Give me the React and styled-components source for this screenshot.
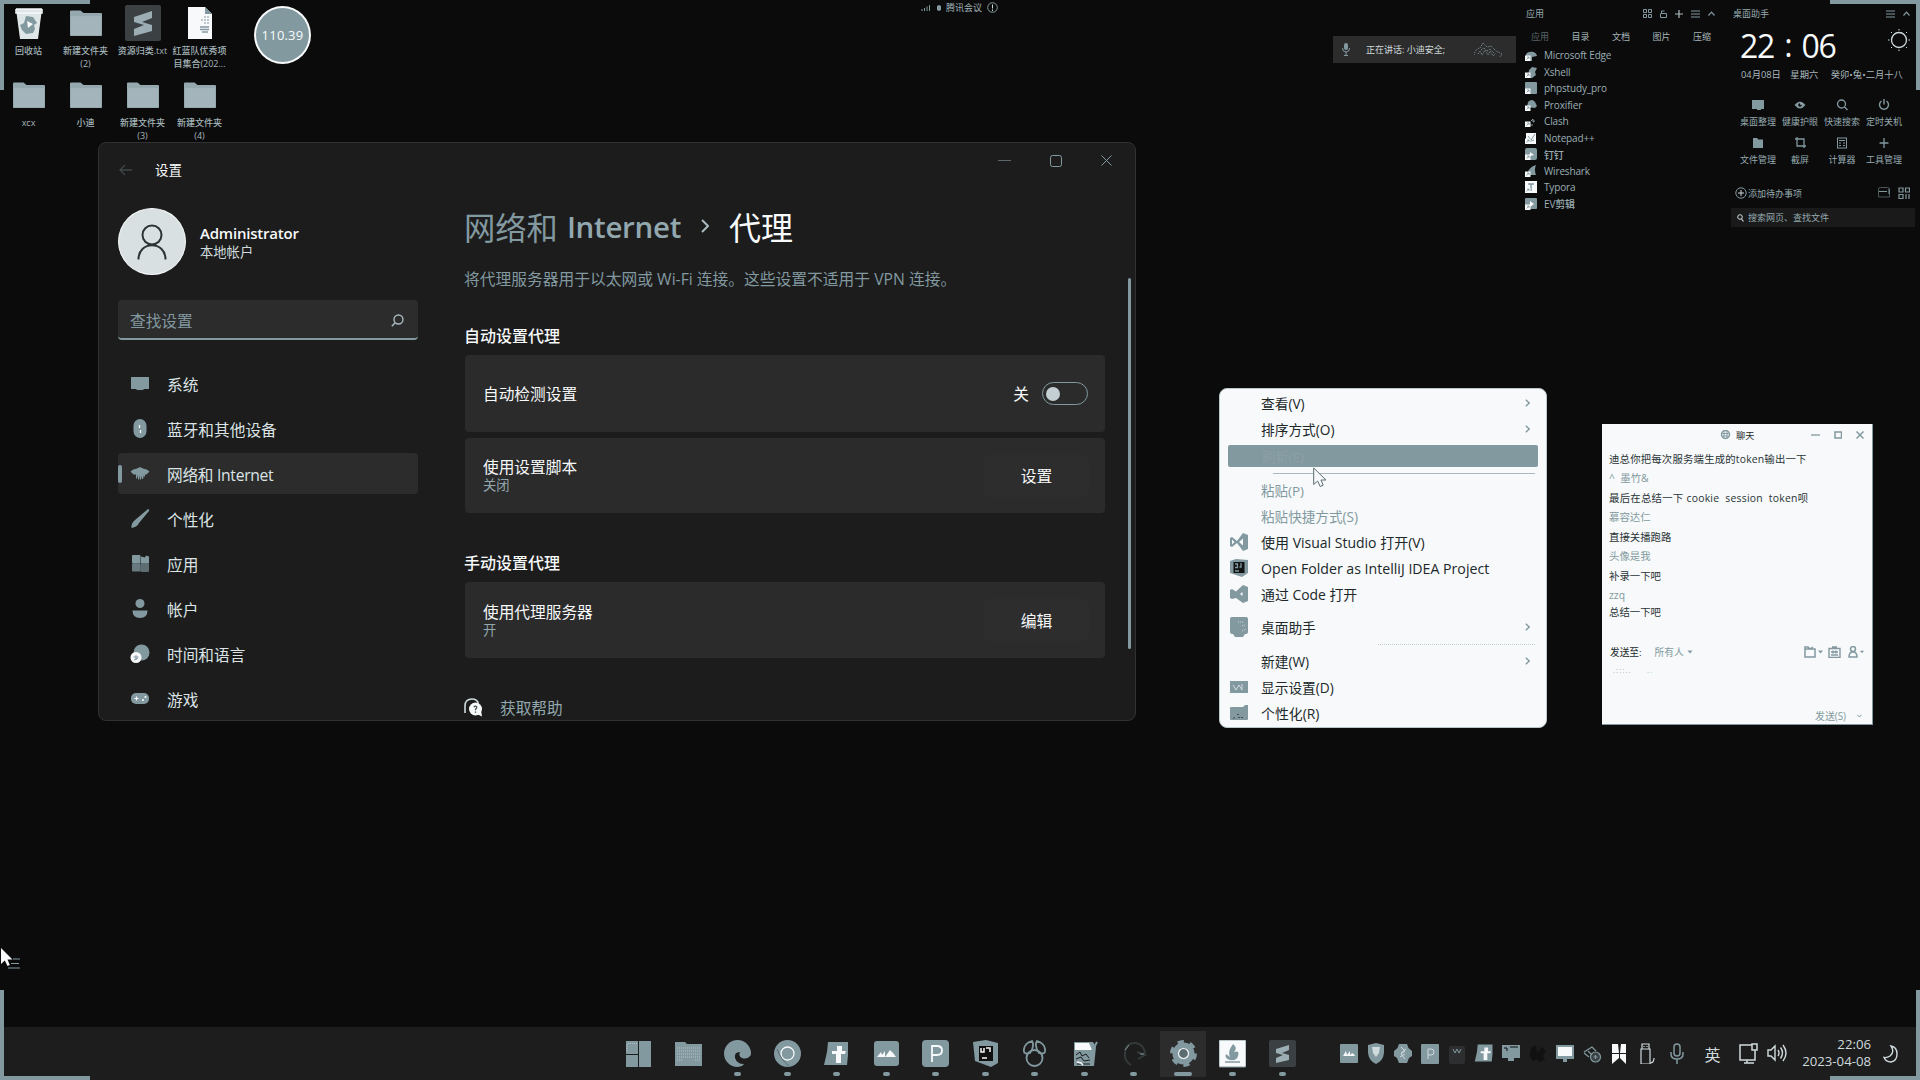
import React from 'react';
import styled, { createGlobalStyle } from 'styled-components';

const INK = '#0b0b0b';
const PANEL = '#1c1c1c';
const CARD = '#2b2b2b';
const STEEL = '#8299a0';
const SNOW = '#f7f9fa';
const PALE = '#cfdadd';

const Global = createGlobalStyle`
  * { box-sizing: border-box; }
  body { margin: 0; background: ${INK}; overflow: hidden; }
  svg { display: block; flex: none; }
`;

const Desktop = styled.div`
  position: relative;
  width: 1920px;
  height: 1080px;
  overflow: hidden;
  background: ${INK};
  color: ${SNOW};
  font-family: 'Open Sans', 'Noto Sans CJK SC', sans-serif;
  font-size: 14px;
  white-space: nowrap;
`;

const Svg = ({ w = 16, h, box, children, ...rest }) => (
  <svg width={w} height={h ?? w} viewBox={box ?? `0 0 ${w} ${h ?? w}`} fill="none" {...rest}>
    {children}
  </svg>
);

/* ---------- screen corner marks ---------- */
const Corner = styled.div`
  position: absolute;
  z-index: 5;
  width: 90px;
  height: 90px;
  border: 0 solid ${STEEL};
  ${(p) => p.$v}: 0;
  ${(p) => p.$h}: 0;
  border-${(p) => p.$v}-width: 4px;
  border-${(p) => p.$h}-width: 4px;
`;

/* ---------- desktop shortcuts ---------- */
const ShortcutGrid = styled.div`
  position: absolute;
  left: 0;
  top: 6px;
  display: grid;
  grid-template-columns: repeat(4, 57px);
  grid-auto-rows: 72px;
`;
const Shortcut = styled.div`
  display: flex;
  flex-direction: column;
  align-items: center;
  gap: 3.5px;
`;
const ShortcutIcon = styled.div`
  height: 34px;
  display: flex;
  align-items: center;
`;
const ShortcutLabel = styled.div`
  font-size: 9px;
  line-height: 13px;
  font-weight: 500;
  text-align: center;
  color: #a3b4b9;
  white-space: pre;
`;

const Folder = ({ w = 32 }) => (
  <Svg w={w} h={w * 0.82} box="0 0 32 26">
    <path d="M0 1.5Q0 .5 1 .5H10.5L13.5 3H31q1 0 1 1V25q0 1-1 1H1q-1 0-1-1Z" fill="#94a8ae" />
    <path d="M1 6H31V25H1Z" fill="#a3b5ba" />
  </Svg>
);
const Bin = () => (
  <Svg w={28} h={33}>
    <path d="M1 2h26l-4 30H5Z" fill="#dfe6e8" />
    <path d="M1 2h26M1 2v4h26V2" stroke={SNOW} strokeWidth="1.5" />
    <path d="M11 9l7 1 4 6-3 2 1 4-2 4-7 1-4-4-2-5 4-2Z" fill={STEEL} />
    <path d="M12 14l6 3-5 4Z" fill={SNOW} />
  </Svg>
);
const Sublime = ({ w = 36 }) => (
  <Svg w={w} box="0 0 36 36">
    <rect width="36" height="36" rx="2" fill="#3b4143" />
    <path d="M9 12 27 6v7l-10 4 10 3v6L9 31v-7l10-4-10-3Z" fill="#9caeb4" />
  </Svg>
);
const TextDoc = () => (
  <Svg w={26} h={34}>
    <path d="M1 1H18l7 7V33H1Z" fill={SNOW} />
    <path d="M18 1l7 7h-7Z" fill={STEEL} />
    <path d="M14 14h8M17 17h5M17 11h5" stroke={STEEL} strokeDasharray="2 1" />
    <path d="M13 21h9M13 23.500h9M15 26h6" stroke={STEEL} strokeWidth="1.400" />
  </Svg>
);

const shortcuts = [
  [<Bin />, '回收站'],
  [<Folder />, '新建文件夹\n(2)'],
  [<Sublime />, '资源归类.txt'],
  [<TextDoc />, '红蓝队优秀项\n目集合(202...'],
  [<Folder />, 'xcx'],
  [<Folder />, '小迪'],
  [<Folder />, '新建文件夹\n(3)'],
  [<Folder />, '新建文件夹\n(4)'],
];

const SpeedBall = styled.div`
  position: absolute;
  left: 254px;
  top: 6px;
  width: 57px;
  height: 58px;
  border-radius: 50%;
  border: 2px solid ${SNOW};
  background: ${STEEL};
  display: flex;
  align-items: center;
  justify-content: center;
  font-size: 13px;
  font-weight: 400;
  letter-spacing: 0.2px;
`;

/* ---------- meeting overlays ---------- */
const MeetingTag = styled.div`
  position: absolute;
  left: 921px;
  top: 0;
  height: 15px;
  display: flex;
  align-items: center;
  gap: 4.500px;
  font-size: 9px;
  color: #9fb0b5;
`;
const SpeakerBar = styled.div`
  position: absolute;
  left: 1333px;
  top: 36px;
  width: 183px;
  height: 27px;
  padding: 0 12px 0 9px;
  background: #2c2c2c;
  display: flex;
  align-items: center;
  font-size: 9px;
  color: ${PALE};
`;
const SpeakerName = styled.span`
  margin-left: 16px;
  margin-right: auto;
`;

/* ---------- settings window ---------- */
const SettingsWindow = styled.div`
  position: absolute;
  left: 98px;
  top: 142px;
  width: 1038px;
  height: 579px;
  border: 1px solid #313131;
  border-radius: 8px;
  background: ${PANEL};
  overflow: hidden;
`;
const TitleBar = styled.div`
  height: 55px;
  display: flex;
  align-items: center;
  padding: 0 3px 2px 20px;
`;
const WindowTitle = styled.span`
  margin-left: 22px;
  font-size: 13.5px;
  line-height: 20px;
`;
const Controls = styled.div`
  margin-left: auto;
  align-self: flex-start;
  display: flex;
`;
const Control = styled.div`
  width: 51px;
  height: 35px;
  display: flex;
  align-items: center;
  justify-content: center;
`;
const WindowBody = styled.div`
  display: flex;
`;
const Sidebar = styled.div`
  width: 319px;
  padding: 10px 0 0 19px;
`;
const Profile = styled.div`
  height: 67px;
  display: flex;
  align-items: center;
  gap: 14px;
`;
const ProfileText = styled.div`
  padding-top: 2px;
`;
const Avatar = styled.div`
  width: 68px;
  height: 67px;
  border-radius: 50%;
  background: #d8e0e2;
  border: 1.5px solid ${SNOW};
  display: flex;
  align-items: center;
  justify-content: center;
`;
const ProfileName = styled.div`
  font-size: 15px;
  line-height: 19px;
  font-weight: 600;
  letter-spacing: -0.2px;
`;
const ProfileKind = styled.div`
  font-size: 13.3px;
  line-height: 18px;
  color: ${PALE};
`;
const SearchBox = styled.div`
  margin-top: 25px;
  height: 40px;
  border-radius: 4px;
  border-bottom: 2px solid ${STEEL};
  background: #2c2c2c;
  padding: 2px 14px 0 12px;
  display: flex;
  align-items: center;
  justify-content: space-between;
  font-size: 15.7px;
  color: ${STEEL};
`;
const Nav = styled.div`
  margin-top: 23px;
  display: flex;
  flex-direction: column;
  gap: 4px;
`;
const NavItem = styled.div`
  height: 41px;
  border-radius: 4px;
  display: flex;
  align-items: center;
  font-size: 15.700px;
  color: #dbe3e5;
  background: ${(p) => (p.$active ? '#2c2c2c' : 'transparent')};
  &::before {
    content: '';
    width: 4px;
    height: 18px;
    border-radius: 2px;
    background: ${(p) => (p.$active ? STEEL : 'transparent')};
  }
`;
const NavIcon = styled.span`
  width: 20px;
  margin: 0 17px 0 8px;
  display: flex;
  justify-content: center;
`;
const NavText = styled.span`
  padding-top: 1px;
  letter-spacing: ${(p) => p.$tight ?? 0}px;
`;
const Main = styled.div`
  width: 641px;
  margin-left: 46px;
  padding-top: 6px;
`;
const Breadcrumb = styled.div`
  height: 44px;
  display: flex;
  align-items: center;
  font-size: 31.300px;
  color: ${STEEL};
`;
const CrumbLatin = styled.span`
  font-weight: 600;
  font-size: 29.500px;
  margin-left: 9px;
  letter-spacing: -0.3px;
  color: #93a8ae;
`;
const CrumbNow = styled.span`
  margin-left: 20px;
  font-size: 32px;
  color: ${SNOW};
`;
const Lead = styled.div`
  margin-top: 20px;
  line-height: 22px;
  font-size: 15.750px;
  color: ${STEEL};
`;
const Section = styled.div`
  margin-top: ${(p) => p.$gap}px;
  margin-bottom: 8px;
  line-height: 22px;
  font-size: 16px;
  font-weight: 500;
`;
const Card = styled.div`
  height: ${(p) => p.$h}px;
  margin-left: 1px;
  margin-bottom: ${(p) => p.$mb ?? 0}px;
  padding: 0 17px 0 18px;
  border-radius: 4px;
  background: ${CARD};
  display: flex;
  align-items: center;
  justify-content: space-between;
`;
const CardTitle = styled.div`
  font-size: 15.7px;
  line-height: 20px;
`;
const CardState = styled.div`
  font-size: 13.3px;
  line-height: 17px;
  color: #93a8ae;
`;
const CardButton = styled.div`
  width: 105px;
  height: 42px;
  margin-right: -1px;
  border-radius: 4px;
  background: #2d2d2d;
  display: flex;
  align-items: center;
  justify-content: center;
  font-size: 15.8px;
`;
const ToggleWrap = styled.div`
  display: flex;
  align-items: center;
  gap: 13px;
  font-size: 15.7px;
`;
const Toggle = styled.div`
  width: 46px;
  height: 23px;
  border: 1px solid ${STEEL};
  border-radius: 12px;
  padding-left: 3px;
  display: flex;
  align-items: center;
  &::before {
    content: '';
    width: 14px;
    height: 14px;
    border-radius: 50%;
    background: #c3cfd3;
  }
`;
const Help = styled.div`
  margin-top: 38px;
  height: 22px;
  display: flex;
  align-items: center;
  gap: 17px;
  font-size: 15.7px;
  color: #93a8ae;
`;
const Scrollbar = styled.div`
  width: 3px;
  height: 371px;
  margin: 80px 0 0 23px;
  border-radius: 2px;
  background: ${STEEL};
`;

const navItems = [
  ['系统', <path d="M1 3h18v12H13l1 1H6l1-1H1Z" fill={STEEL} />],
  ['蓝牙和其他设备', <g><rect x="3.5" y="0" width="13" height="19" rx="6.5" fill={STEEL} /><path d="M9.500 6v3M10.500 11v3" stroke={SNOW} strokeWidth="1.300" /></g>],
  ['网络和 Internet', <path d="M.5 7.500Q3 5 7 4.500L10 3l3 1.500Q17 5 19.500 7.500L16.500 10.500H15v2h-1V11l-1 4h-1v-3.500l-1 4h-1V11.500l-1 4H8V11l-1 3.500H6v-4H3.500Z" fill={STEEL} />],
  ['个性化', <path d="M18 0q2 .5 1 2L9 14q-1.500 4-7.500 5Q1 14 5 11Z" fill={STEEL} />],
  ['应用', <g fill={STEEL}><rect x="2" y="1" width="8.500" height="8.500" rx="1" /><path d="M11 2.500l4 1 1-2 3 1v7h-8Z" /><rect x="2" y="9.500" width="8.500" height="8" rx="1" opacity=".75" /><rect x="10.500" y="9.500" width="8.500" height="8.500" rx="1" opacity=".65" /></g>],
  ['帐户', <g fill={STEEL}><circle cx="10" cy="4.500" r="4.500" /><path d="M2.500 11.500h15q0 7.500-7.500 7.500t-7.500-7.500Z" /></g>],
  ['时间和语言', <g><circle cx="11.500" cy="8.500" r="8" fill={STEEL} /><circle cx="6" cy="13.500" r="5.500" fill={SNOW} /><path d="M3.500 13h5M6 11v5M4 16l4-2" stroke={STEEL} /></g>],
  ['游戏', <g><rect x="1" y="4" width="18" height="11" rx="5" fill={STEEL} /><path d="M4.500 9.500h4M6.500 7.500v4" stroke={SNOW} strokeWidth="1.200" /><circle cx="13" cy="11" r="1.100" fill={SNOW} /><circle cx="15.500" cy="8" r="1.100" fill={SNOW} /></g>],
];

const Settings = () => (
  <SettingsWindow>
    <TitleBar>
      <Svg w={14} h={12}><path d="M6 1 1 6l5 5M1 6h12" stroke="#3f4648" strokeWidth="1.300" /></Svg>
      <WindowTitle>设置</WindowTitle>
      <Controls>
        <Control><Svg w={13} h={12}><path d="M0 5.500h13" stroke="#5a676b" /></Svg></Control>
        <Control><Svg w={12}><rect x=".5" y=".5" width="11" height="11" rx="2" stroke={STEEL} /></Svg></Control>
        <Control><Svg w={11}><path d="M.5.5l10 10M10.500.5l-10 10" stroke={STEEL} /></Svg></Control>
      </Controls>
    </TitleBar>
    <WindowBody>
      <Sidebar>
        <Profile>
          <Avatar>
            <Svg w={32} h={38}>
              <circle cx="16" cy="12" r="9.500" stroke="#2c3335" strokeWidth="2" />
              <path d="M2.500 36.500C2.500 17.500 29.500 17.500 29.500 36.500" stroke="#2c3335" strokeWidth="2" />
            </Svg>
          </Avatar>
          <ProfileText>
            <ProfileName>Administrator</ProfileName>
            <ProfileKind>本地帐户</ProfileKind>
          </ProfileText>
        </Profile>
        <SearchBox>
          查找设置
          <Svg w={13}><circle cx="7.500" cy="5.500" r="4.500" stroke="#a9b9be" strokeWidth="1.400" /><path d="M4.200 8.800.8 12.200" stroke="#a9b9be" strokeWidth="1.500" /></Svg>
        </SearchBox>
        <Nav>
          {navItems.map(([label, art], i) => (
            <NavItem key={label} $active={i === 2}>
              <NavIcon><Svg w={20} h={19}>{art}</Svg></NavIcon>
              <NavText $tight={i === 2 ? -0.3 : 0}>{label}</NavText>
            </NavItem>
          ))}
        </Nav>
      </Sidebar>
      <Main>
        <Breadcrumb>
          网络和
          <CrumbLatin>Internet</CrumbLatin>
          <Svg w={8} h={14} style={{ marginLeft: 20 }}><path d="M1 1l6 6-6 6" stroke="#a9b9be" strokeWidth="2" /></Svg>
          <CrumbNow>代理</CrumbNow>
        </Breadcrumb>
        <Lead>将代理服务器用于以太网或 Wi-Fi 连接。这些设置不适用于 VPN 连接。</Lead>
        <Section $gap={35}>自动设置代理</Section>
        <Card $h={77} $mb={6}>
          <CardTitle>自动检测设置</CardTitle>
          <ToggleWrap>关<Toggle /></ToggleWrap>
        </Card>
        <Card $h={75}>
          <div>
            <CardTitle>使用设置脚本</CardTitle>
            <CardState>关闭</CardState>
          </div>
          <CardButton>设置</CardButton>
        </Card>
        <Section $gap={39}>手动设置代理</Section>
        <Card $h={76}>
          <div>
            <CardTitle>使用代理服务器</CardTitle>
            <CardState>开</CardState>
          </div>
          <CardButton>编辑</CardButton>
        </Card>
        <Help>
          <Svg w={19} h={19}>
            <path d="M1 15V8Q1 1 8 1q5 0 6.500 4.500" stroke={PALE} strokeWidth="1.600" />
            <circle cx="11.500" cy="11" r="6.500" fill={SNOW} /><path d="M13 16l5 2.500-1-6Z" fill={SNOW} />
            <path d="M9.800 9.200q1.700-2 3 0 0 1-1.300 2v1M11.500 13.500v1.200" stroke="#41494b" strokeWidth="1.200" />
          </Svg>
          获取帮助
        </Help>
      </Main>
      <Scrollbar />
    </WindowBody>
  </SettingsWindow>
);

/* ---------- context menu ---------- */
const Menu = styled.div`
  position: absolute;
  left: 1219px;
  top: 388px;
  width: 328px;
  height: 340px;
  padding: 1px 9px 0;
  border: 1px solid #b9c6ca;
  border-radius: 8px;
  background: ${SNOW};
  color: #1d2223;
`;
const MenuItem = styled.div`
  height: ${(p) => p.$h ?? 26}px;
  padding-right: 7px;
  display: flex;
  align-items: center;
  color: ${(p) => (p.$off ? STEEL : '#20282a')};
`;
const MenuText = styled.span`
  flex: 1;
  font-size: ${(p) => p.$size ?? 13.7}px;
`;
const MenuIcon = styled.span`
  width: 32px;
  padding-left: 1px;
`;
const MenuHover = styled.div`
  height: 22px;
  margin: 3px -1px 3px;
  padding-left: 34px;
  border-radius: 2px;
  background: ${STEEL};
  display: flex;
  align-items: center;
  font-size: 13.3px;
  color: #8ba1a7;
`;
const MenuRule = styled.div`
  height: ${(p) => p.$h}px;
  display: flex;
  align-items: center;
  padding: 0 2px 0 ${(p) => p.$indent ?? 44}px;
  &::after {
    content: '';
    flex: 1;
    border-top: 1px ${(p) => (p.$kind === 'dotted' ? 'dotted' : 'solid')} ${(p) => (p.$kind === 'none' ? 'transparent' : p.$kind === 'dotted' ? '#c3cfd3' : '#a9b9be')};
  }
`;
const Arrow = () => <Svg w={5} h={8}><path d="M.8.8 4.200 4 .8 7.200" stroke={STEEL} strokeWidth="1.400" /></Svg>;

const VsIcon = <Svg w={18} h={18}><path d="M0 5l2-1 5 4 6-8 5 2v14l-5 2-6-8-5 4-2-1Z" fill={STEEL} /><path d="M13 5.500v7L9 9ZM2 6.500 4.500 9 2 11.500Z" fill={SNOW} /></Svg>;
const IdeaIcon = <Svg w={18} h={18}><path d="M0 2 6 0l12 1v13l-6 4L0 14Z" fill={STEEL} /><rect x="3.500" y="3" width="11" height="11" fill="#111" /><path d="M5 5h2.500v3.500H5M11 4v4H9.500M5 12h4" stroke={STEEL} strokeWidth="1.300" /></Svg>;
const CodeIcon = <Svg w={18} h={18}><path d="M0 5l2-1 4 2.500L13 0l5 2v14l-5 2-7-5L2 14l-2-1Z" fill={STEEL} /><path d="M12.500 7v4L10 9Z" fill={SNOW} /></Svg>;
const HelperIcon = <Svg w={18} h={20}><rect width="18" height="17" rx="2" fill={STEEL} /><path d="M3 17h12l-2 3H5Z" fill={STEEL} /><path d="M8 5h6M12 9l3-1M12 14l4-2" stroke={PALE} strokeDasharray="1 1" /></Svg>;
const DisplayIcon = <Svg w={18} h={12}><rect width="18" height="12" fill={STEEL} /><path d="M3 4l3 5 3-5 3 5V3" stroke={PALE} /></Svg>;
const PersonalIcon = <Svg w={18} h={16}><path d="M0 3q0-1 1-1h12l2-2h3v14q0 1-1 1H1q-1 0-1-1Z" fill={STEEL} /><path d="M3 13h3M7 9.500h2M8 12.500h5" stroke="#41494b" strokeDasharray="2 1" /></Svg>;

const ContextMenu = () => (
  <Menu>
    <MenuItem $h={26}><MenuIcon /><MenuText>查看(V)</MenuText><Arrow /></MenuItem>
    <MenuItem $h={26}><MenuIcon /><MenuText>排序方式(O)</MenuText><Arrow /></MenuItem>
    <MenuHover>刷新(E)</MenuHover>
    <MenuRule $h={7} $kind="solid" />
    <MenuItem $off><MenuIcon /><MenuText $size={13.5}>粘贴(P)</MenuText></MenuItem>
    <MenuItem $off><MenuIcon /><MenuText $size={13.6}>粘贴快捷方式(S)</MenuText></MenuItem>
    <MenuItem><MenuIcon>{VsIcon}</MenuIcon><MenuText $size={14}>使用 Visual Studio 打开(V)</MenuText></MenuItem>
    <MenuItem><MenuIcon>{IdeaIcon}</MenuIcon><MenuText $size={14.15}>Open Folder as IntelliJ IDEA Project</MenuText></MenuItem>
    <MenuItem><MenuIcon>{CodeIcon}</MenuIcon><MenuText $size={13.9}>通过 Code 打开</MenuText></MenuItem>
    <MenuRule $h={7} $kind="none" />
    <MenuItem><MenuIcon>{HelperIcon}</MenuIcon><MenuText>桌面助手</MenuText><Arrow /></MenuItem>
    <MenuRule $h={8} $kind="dotted" $indent={149} />
    <MenuItem><MenuIcon /><MenuText>新建(W)</MenuText><Arrow /></MenuItem>
    <MenuItem><MenuIcon>{DisplayIcon}</MenuIcon><MenuText>显示设置(D)</MenuText></MenuItem>
    <MenuItem><MenuIcon>{PersonalIcon}</MenuIcon><MenuText $size={13.9}>个性化(R)</MenuText></MenuItem>
  </Menu>
);

/* ---------- chat window ---------- */
const Chat = styled.div`
  position: absolute;
  left: 1602px;
  top: 424px;
  width: 271px;
  height: 301px;
  background: ${SNOW};
  border-right: 1px solid ${STEEL};
  border-bottom: 1px solid ${STEEL};
  display: flex;
  flex-direction: column;
  color: #22292b;
`;
const ChatTitle = styled.div`
  height: 22px;
  padding: 0 8px 0 118px;
  display: flex;
  align-items: center;
  font-size: 9.2px;
`;
const ChatName = styled.span`
  margin: -1px auto 0 5px;
`;
const ChatControls = styled.div`
  display: flex;
  align-items: center;
  gap: 14px;
`;
const Messages = styled.div`
  padding: 2.500px 0 0 7px;
`;
const Message = styled.div`
  height: ${(p) => p.$h ?? 19.5}px;
  display: flex;
  align-items: center;
  font-size: 10.4px;
  letter-spacing: ${(p) => p.$track ?? 0}px;
  color: ${(p) => (p.$who ? STEEL : '#2a3335')};
  white-space: pre;
`;
const SendRow = styled.div`
  margin-top: auto;
  padding: 0 8px 0 8px;
  height: 20px;
  display: flex;
  align-items: center;
  font-size: 9.700px;
`;
const SendTarget = styled.span`
  margin: 0 auto 0 13px;
  color: ${STEEL};
  display: flex;
  align-items: center;
  gap: 3px;
`;
const ChatTools = styled.div`
  display: flex;
  align-items: center;
  gap: 2px;
`;
const Draft = styled.div`
  height: 45px;
  padding: 4px 0 0 11px;
  font-size: 8px;
  line-height: 8px;
  letter-spacing: 1px;
  color: #a9b9be;
  white-space: pre;
`;
const SendButton = styled.div`
  height: 17px;
  padding-right: 10px;
  display: flex;
  align-items: center;
  justify-content: flex-end;
  gap: 11px;
  font-size: 9.900px;
  color: ${STEEL};
`;
const Caret = ({ w = 5 }) => <Svg w={w} h={4} box="0 0 5 4"><path d="M0 .5h5L2.500 3.500Z" fill={STEEL} /></Svg>;

const messages = [
  ['迪总你把每次服务端生成的token输出一下', false, 0.18],
  ['^  墨竹&', true],
  ['最后在总结一下 cookie  session  token呗', false, 0.25],
  ['慕容达仁', true],
  ['直接关播跑路', false],
  ['头像是我', true],
  ['补录一下吧', false],
  ['zzq', true],
  ['总结一下吧', false],
];

const ChatWindow = () => (
  <Chat>
    <ChatTitle>
      <Svg w={11} h={10}><circle cx="5.500" cy="4.500" r="4" stroke={STEEL} strokeWidth="1.500" /><path d="M2.500 3.500h6M2.500 6h6M4 1v8M7 1v8" stroke={STEEL} /></Svg>
      <ChatName>聊天</ChatName>
      <ChatControls>
        <Svg w={9} h={8}><path d="M0 4h9" stroke={STEEL} strokeWidth="1.300" /></Svg>
        <Svg w={8}><rect x="1" y="1" width="6.500" height="6" stroke={STEEL} strokeWidth="1.500" /></Svg>
        <Svg w={8}><path d="M.5.5l7 7M7.500.5l-7 7" stroke={STEEL} strokeWidth="1.500" /></Svg>
      </ChatControls>
    </ChatTitle>
    <Messages>
      {messages.map(([text, who, track], i) => (
        <Message key={text} $who={who} $track={track} $h={i === 8 ? 14 : 19.5}>{text}</Message>
      ))}
    </Messages>
    <SendRow>
      发送至:
      <SendTarget>所有人 <Caret w={6} /></SendTarget>
      <ChatTools>
        <Svg w={12} h={12}><path d="M1 3h10v8H1ZM1 3V1h3l2 2 3-2" stroke={STEEL} strokeWidth="1.500" /></Svg>
        <Caret />
        <Svg w={13} h={12} style={{ marginLeft: 3 }}><path d="M1 2.500h11v9H1ZM4 1h5M3 6h7M5 4.500v3M8 4.500v3M3 9h7" stroke={STEEL} strokeWidth="1.400" /></Svg>
        <Svg w={10} h={12} style={{ marginLeft: 5 }}><circle cx="5" cy="3" r="2.500" stroke={STEEL} strokeWidth="1.500" /><path d="M1 11q0-5 4-5t4 5Z" stroke={STEEL} strokeWidth="1.500" /></Svg>
        <Caret w={4} />
      </ChatTools>
    </SendRow>
    <Draft>.:::..     ..</Draft>
    <SendButton>发送(S)<Svg w={5} h={4}><path d="M.5.8 2.500 3l2-2.200" stroke={STEEL} /></Svg></SendButton>
  </Chat>
);

/* ---------- application launcher ---------- */
const AppsPanel = styled.div`
  position: absolute;
  left: 1515px;
  top: 4px;
  width: 205px;
  padding-left: 10px;
  color: #96aab0;
  font-size: 9px;
`;
const PanelHead = styled.div`
  height: 19px;
  padding-right: 5px;
  display: flex;
  align-items: center;
  justify-content: space-between;
`;
const HeadLabel = styled.span`
  margin: -1px 0 0 ${(p) => p.$ml ?? 1}px;
`;
const HeadIcons = styled.div`
  display: flex;
  align-items: center;
  gap: 8px;
`;
const Tabs = styled.div`
  height: 24px;
  padding: 3px 9px 0 6px;
  display: flex;
  align-items: center;
  justify-content: space-between;
`;
const Tab = styled.span`
  color: ${(p) => (p.$dim ? '#596569' : '#a5b5ba')};
`;
const AppRow = styled.div`
  height: 16.5px;
  display: flex;
  align-items: center;
  gap: 7px;
  font-size: 10px;
  font-weight: 500;
  letter-spacing: -0.15px;
  color: #9bafb5;
`;
const MenuLines = ({ w = 9 }) => <Svg w={w} h={8} box="0 0 9 8"><path d="M0 1h9M0 4h9M0 7h9" stroke={STEEL} /></Svg>;
const UpArrow = () => <Svg w={7} h={5}><path d="M.5 4.500 3.500 1.200l3 3.300" stroke={STEEL} strokeWidth="1.200" /></Svg>;

const appArt = {
  'Microsoft Edge': <path d="M1 5a6 5 0 0 1 11 2L7 8v4H1Z" fill={STEEL} />,
  Xshell: <path d="M4 4l3-3 5 1-2 4 1 3-4 3H3Z" fill={STEEL} />,
  phpstudy_pro: <rect width="12" height="12" rx="1" fill={STEEL} />,
  Proxifier: <path d="M3 3q4-4 7 0l2 4-2 2-8-1Z" fill={STEEL} />,
  Clash: <path d="M6 6l2-2v3h1v-2M4 10h4" stroke={STEEL} />,
  'Notepad++': <g><path d="M1 1h10v11H1Z" fill={SNOW} /><path d="M3 4l3 4 4-6M3 10l6-2" stroke={STEEL} /></g>,
  钉钉: <g><rect width="12" height="12" rx="2" fill={STEEL} /><path d="M5 4l4 3-4 1Z" fill={SNOW} /></g>,
  Wireshark: <path d="M2 9Q4 2 11 0q-2 5 0 10H2Z" fill={STEEL} />,
  Typora: <g><rect width="12" height="12" fill={SNOW} /><path d="M3 3h6M6 3v7" stroke={STEEL} strokeWidth="1.500" /></g>,
  EV剪辑: <g><rect width="12" height="11" rx="1" fill={STEEL} /><path d="M5 3l4 3-4 3Z" fill={SNOW} /></g>,
};

const Launcher = () => (
  <AppsPanel>
    <PanelHead>
      <HeadLabel>应用</HeadLabel>
      <HeadIcons>
        <Svg w={9}><path d="M.5.5h3v3h-3ZM5.500.5h3v3h-3ZM.5 5.500h3v3h-3ZM5.500 5.500h3v3h-3Z" stroke={STEEL} /></Svg>
        <Svg w={7} h={8}><path d="M1 3.500h5.500V7.500H.5v-4M1.500 3.500V1h3" stroke={STEEL} /></Svg>
        <Svg w={8}><path d="M4 0v8M0 4h8" stroke="#a9b9be" strokeWidth="1.200" /></Svg>
        <MenuLines />
        <UpArrow />
      </HeadIcons>
    </PanelHead>
    <Tabs>
      {['应用', '目录', '文档', '图片', '压缩'].map((t, i) => <Tab key={t} $dim={i === 0}>{t}</Tab>)}
    </Tabs>
    {Object.entries(appArt).map(([name, art]) => (
      <AppRow key={name}>
        <Svg w={12}>{art}<rect y="6.500" width="5.500" height="5.500" fill={SNOW} /><path d="M1.500 10.500l2.500-2.500M2 8h2v2" stroke={STEEL} strokeWidth=".8" /></Svg>
        {name}
      </AppRow>
    ))}
  </AppsPanel>
);

/* ---------- desktop assistant ---------- */
const Assistant = styled.div`
  position: absolute;
  left: 1731px;
  top: 4px;
  width: 184px;
  color: #96aab0;
  font-size: 9px;
`;
const ClockRow = styled.div`
  height: 44px;
  padding: 2px 5px 0 9px;
  display: flex;
  align-items: center;
  justify-content: space-between;
`;
const Clock = styled.div`
  display: flex;
  align-items: center;
  font-size: 32px;
  line-height: 44px;
  font-weight: 400;
  letter-spacing: -1.200px;
  color: ${SNOW};
`;
const Colon = styled.span`
  margin: -3px 10px 0 10px;
`;
const DateRow = styled.div`
  height: 14px;
  display: flex;
  align-items: center;
  gap: 9.5px;
  padding-left: 10px;
  font-size: 9.300px;
  color: #a9b9be;
`;
const Lunar = styled.span`
  margin-left: 3px;
`;
const Tools = styled.div`
  margin-top: 17px;
  padding: 0 10px 0 6px;
  display: grid;
  grid-template-columns: repeat(4, 42px);
  grid-auto-rows: 37.5px;
`;
const Tool = styled.div`
  display: flex;
  flex-direction: column;
  align-items: center;
  gap: 4px;
  line-height: 12px;
`;
const ToolIcon = styled.div`
  height: 14px;
  display: flex;
  align-items: center;
`;
const Todo = styled.div`
  margin-top: 13px;
  height: 14px;
  padding: 0 5px 0 4px;
  display: flex;
  align-items: center;
  gap: 1px;
`;
const TodoText = styled.span`
  margin-right: auto;
`;
const FindBox = styled.div`
  margin-top: 8px;
  height: 19px;
  padding-left: 6px;
  background: #1a1a1a;
  display: flex;
  align-items: center;
  gap: 4px;
`;

const tools = [
  ['桌面整理', <g fill={STEEL}><rect y="2" width="12" height="9" /><path d="M5 11h4v1H5Z" /></g>],
  ['健康护眼', <g><path d="M.5 7q5.500-7 11 0-5.500 7-11 0Z" fill={STEEL} /><circle cx="6" cy="7" r="1.800" fill={INK} /><circle cx="7" cy="6" r=".8" fill={SNOW} /></g>],
  ['快速搜索', <g stroke={STEEL} strokeWidth="1.300"><circle cx="5.500" cy="6" r="4" /><path d="M8.500 9l3 3" /></g>],
  ['定时关机', <g stroke={STEEL} strokeWidth="1.400"><path d="M3.500 3a4.500 4.500 0 1 0 5 0M6 1v5.500" /></g>],
  ['文件管理', <path d="M1 2h4l1.500 1.500H11V12H1Z" fill={STEEL} />],
  ['截屏', <path d="M3 1v9h9M1 3h9v9" stroke={STEEL} strokeWidth="1.300" />],
  ['计算器', <g stroke={STEEL}><rect x="1.500" y="2" width="9" height="10" /><path d="M3 4.500h6M3 7h2M7 7h2M3 9.500h2M7 9.500h2" /></g>],
  ['工具管理', <path d="M6 2v10M1.500 7h9" stroke={STEEL} strokeWidth="1.300" />],
];

const AssistantPanel = () => (
  <Assistant>
    <PanelHead>
      <HeadLabel $ml={2}>桌面助手</HeadLabel>
      <HeadIcons><MenuLines /><UpArrow /></HeadIcons>
    </PanelHead>
    <ClockRow>
      <Clock>22<Colon>:</Colon>06</Clock>
      <Svg w={22} style={{ marginTop: -13 }}>
        <circle cx="11" cy="11" r="7.500" stroke={PALE} strokeWidth="1.300" />
        <path d="M11 0v1.500M11 20.500V22M0 11h1.500M20.500 11H22M3 3l1 1M18 18l1 1M19 3l-1 1M4 18l-1 1" stroke={PALE} />
      </Svg>
    </ClockRow>
    <DateRow><span>04月08日</span><span>星期六</span><Lunar>癸卯•兔•二月十八</Lunar></DateRow>
    <Tools>
      {tools.map(([label, art]) => (
        <Tool key={label}><ToolIcon><Svg w={12} h={14}>{art}</Svg></ToolIcon>{label}</Tool>
      ))}
    </Tools>
    <Todo>
      <Svg w={12}><circle cx="6" cy="6" r="5.200" stroke={STEEL} /><path d="M6 3v6M3 6h6" stroke={PALE} /></Svg>
      <TodoText>添加待办事项</TodoText>
      <Svg w={12} style={{ marginRight: 7 }}><path d="M.5 2q0-1.500 2-1.500h7q2 0 2 1.500v8h-11Z" stroke="#4b5659" /><path d="M1 4.500h8M11 2v5" stroke={STEEL} /></Svg>
      <Svg w={12}><path d="M1 1h4v4H1ZM7.500 1h4v4h-4ZM1 7.500h4v4H1ZM8 7v5M11 7v5" stroke={STEEL} strokeWidth="1.200" /></Svg>
    </Todo>
    <FindBox>
      <Svg w={7} h={8}><circle cx="3" cy="3" r="2.300" stroke={PALE} /><path d="M4.500 5l2 2.500" stroke={PALE} strokeWidth="1.200" /></Svg>
      搜索网页、查找文件
    </FindBox>
  </Assistant>
);

/* ---------- taskbar ---------- */
const Taskbar = styled.div`
  position: absolute;
  left: 0;
  right: 0;
  bottom: 0;
  height: 53px;
  padding: 0 22px 0 614px;
  background: #1d1d1d;
  display: flex;
  align-items: center;
`;
const Dock = styled.div`
  display: flex;
`;
const DockItem = styled.div`
  width: 49.5px;
  height: 53px;
  display: flex;
  flex-direction: column;
  align-items: center;
  padding-top: 13px;
  background: linear-gradient(${(p) => (p.$active ? '#2c2c2c' : 'transparent')}, ${(p) => (p.$active ? '#2c2c2c' : 'transparent')}) center 60% / 46px 46px no-repeat;
  &::after {
    content: '';
    width: ${(p) => (p.$active ? 18 : 7)}px;
    height: 4px;
    margin-top: 4px;
    border-radius: 2px;
    background: ${(p) => (p.$run ? STEEL : 'transparent')};
  }
`;
const Tray = styled.div`
  display: grid;
  grid-template-columns: repeat(12, 27px) 35px 37px 36px 20px;
  justify-items: center;
  align-items: center;
  margin-left: 28px;
  font-size: 16px;
  color: ${PALE};
`;
const TrayClock = styled.div`
  margin: -1px 0 0 auto;
  text-align: right;
  font-size: 13.2px;
  line-height: 17px;
  color: ${PALE};
`;
const Moon = styled.div`
  margin-left: 12px;
`;

const tee = <path d="M14 6h5v5h4l-1 3h-4v9h-5v-9h-4V11h5Z" fill={SNOW} />;
const dock = [
  <g fill={STEEL}><path d="M1 1h12v13H1ZM14 1h12v26H14ZM1 15h12v12H1Z" /><path d="M3 3.500h9M2 4v8" stroke="#b6c4c8" strokeDasharray="1 1" /></g>,
  <g><path d="M0 2h10l2 2h15v22H0Z" fill={STEEL} /><path d="M2 8h23M2 11h23M2 14h23M2 17h23M2 20h6M20 20h5" stroke="#b6c4c8" strokeDasharray="1 1" /></g>,
  <g><circle cx="13.500" cy="13.500" r="13.500" fill={STEEL} /><path d="M27 15q-4 5-9 3-4-2-2-6-6 0-5 6 2 6 9 6-2 3-6 3 10 1 13-8Z" fill={PANEL} /></g>,
  <g><circle cx="13.500" cy="13.500" r="13.500" fill={STEEL} /><circle cx="13.500" cy="13.500" r="6.500" fill="#8299a0" stroke={SNOW} strokeWidth="1.300" /><path d="M3 9q4 11 12 17" stroke="#5c6d72" /></g>,
  <g><path d="M5 2h20v13l-1 10H1L4 12Z" fill={STEEL} />{tee}</g>,
  <g><rect x="1" y="1" width="25" height="25" rx="3" fill={STEEL} /><path d="M4 17l4-5 1 3 3-4v6l5-7 3 3 3 4H4Z" fill={SNOW} /></g>,
  <g><rect width="27" height="27" rx="4" fill={STEEL} /><path d="M10 22V6h5q5 0 5 4.500T15 15h-5" stroke={SNOW} strokeWidth="1.800" /></g>,
  <g><path d="M1 2 14 0l12 3v20l-7 4L3 21Z" fill={STEEL} /><rect x="7" y="6" width="14" height="15" fill="#101010" /><path d="M9 8v4h3V8M14 8h4v4M10 18h5" stroke={SNOW} strokeWidth="1.500" /></g>,
  <g stroke={STEEL} strokeWidth="1.800"><path d="M9 13Q2 15 3 9t8-8q3 5-2 12ZM18 13q7 2 6-4t-8-8q-3 5 2 12Z" /><circle cx="13.500" cy="18" r="8" /></g>,
  <g><path d="M3 2h19l3 5-2 19H3Z" fill={STEEL} /><path d="M4 3h14l3 7H4Z" fill={SNOW} /><path d="M5 15l4-3 2 4 4-2 3 4M5 19l5-2 3 4 6-1M6 24h13" stroke={PANEL} /><path d="M6 22l4 1 2 2" stroke={SNOW} strokeWidth="1.500" /><path d="M26 2 19 15" stroke={STEEL} strokeWidth="2" /></g>,
  <g><path d="M5 13Q6 2 16 3q9 2 9 12M5 13q-1 8 6 12M17 12l8 3-7 4" stroke="#34393a" strokeWidth="2" /><path d="M9 5 5 10M20 14h4" stroke={STEEL} /></g>,
  <g><circle cx="13.500" cy="13.500" r="8" stroke={STEEL} strokeWidth="6" /><circle cx="13.500" cy="13.500" r="11.500" stroke={STEEL} strokeWidth="4" strokeDasharray="6 6.040" /><circle cx="13.500" cy="13.500" r="5" stroke={SNOW} strokeWidth="1.200" fill="#5c6d72" /></g>,
  <g><rect width="27" height="27" rx="1" fill={SNOW} stroke={STEEL} /><path d="M14 4q5 4 1 8 6-2 4 4-1 5-8 4-6-2-4-6l4 3q-3-5 3-13Z" fill={STEEL} /><path d="M6 22h15" stroke={STEEL} strokeWidth="1.500" /></g>,
  <g><rect width="27" height="27" rx="2" fill="#3b4143" /><path d="M7 9 20 5v5l-7 3 7 2v5L7 23v-5l7-3-7-2Z" fill="#9caeb4" /></g>,
];

const tray = [
  <g><rect x="1" y="1" width="18" height="19" rx="1" fill={STEEL} /><path d="M4 13l3-5 1 4 3-4v4q3-4 5 1Z" fill={SNOW} /></g>,
  <g><path d="M2 2l8-2 8 2v8q-1 8-8 11Q3 18 2 10Z" fill={STEEL} /><path d="M6 4h8l-1 6-3 4-3-4Z" fill={PALE} /></g>,
  <g><path d="M6 1h8l1.500 4L19 8v5l-3 2-2 5H6l-2-5-3-2V8l3.500-3Z" fill={STEEL} /><path d="M8 4l4 4-4 3 4 5M13 6l-5 4M7 14l5-3" stroke={PALE} /></g>,
  <g><rect x="1" y="1" width="18" height="20" rx="1" fill={STEEL} /><path d="M8 16V6h3q3 0 3 3t-3 3H8" stroke={PALE} /></g>,
  <g><rect x="2" y="3" width="16" height="18" rx="2" fill="#2c2e2f" /><path d="M6 6l2 4 2-4 2 4 2-4" stroke={STEEL} /></g>,
  <g transform="scale(.74)"><path d="M5 2h20v13l-1 10H1L4 12Z" fill={STEEL} />{tee}</g>,
  <g><path d="M1 2h18v13H13v3H7v-3H1Z" fill={STEEL} /><path d="M3 5h3v3M9 4h8" stroke={INK} /></g>,
  <g fill="#111"><path d="M3 5l5-3 1 8 5-6 4 4-3 5 2 4-6 2-2-3-4 2-3-5Z" /></g>,
  <g><rect x="1" y="2" width="18" height="14" fill={STEEL} /><rect x="3" y="4" width="14" height="9" fill={SNOW} /><path d="M8 16h4v3H8Z" fill={STEEL} /></g>,
  <g stroke={STEEL} strokeWidth="1.200"><path d="M2 9l8-5 4 4M2 10l5 4M6 8l5 5" /><circle cx="13.500" cy="14" r="5" fill="#3b4143" /><path d="M11.500 14h4M13.500 12v4" /></g>,
  <g fill={SNOW}><path d="M3 1h6l1 9H3ZM11 10l1-9h5v9ZM3 11h7v4l-7 6ZM11 11h6v10l-6-6Z" /></g>,
  <g stroke={PALE} strokeWidth="1.200"><path d="M6 1h7v5H6ZM5 6h9v15H5ZM8 3v1M11 3v1" /><path d="M14 20q4 0 4-5" /></g>,
  <g stroke={STEEL} strokeWidth="1.500"><rect x="7" y="1" width="6" height="12" rx="3" /><path d="M4 9v2q0 5 6 5t6-5V9M10 16v5" /></g>,
  null,
  <g stroke={PALE} strokeWidth="1.500"><path d="M13 2H1v15h15V8M5 20h10M8 17v3M13 1h5v6h-5ZM16 7v3" /></g>,
  <g stroke={PALE} strokeWidth="1.400"><path d="M1 7h3l4-4v14l-4-4H1ZM11 7q2 3 0 6M13.500 4.500q4 5 0 11M16 2q6 8 0 16" /></g>,
];

const TaskbarView = () => (
  <Taskbar>
    <Dock>
      {dock.map((art, i) => (
        <DockItem key={i} $run={i > 1} $active={i === 11}><Svg w={27} h={28}>{art}</Svg></DockItem>
      ))}
    </Dock>
    <Tray>
      {tray.map((art, i) => (art ? <Svg key={i} w={20} h={21}>{art}</Svg> : <span key={i}>英</span>))}
    </Tray>
    <TrayClock>22:06<br />2023-04-08</TrayClock>
    <Moon><Svg w={15} h={18}><path d="M8 1q4 6-1 10-3 2-6 1.500Q3 17 8 17q6-1 6-8T8 1Z" stroke={PALE} strokeWidth="1.400" /></Svg></Moon>
  </Taskbar>
);

/* ---------- pointers ---------- */
const Pointer = styled.div`
  position: absolute;
  z-index: 6;
  left: ${(p) => p.$x}px;
  top: ${(p) => p.$y}px;
`;

export default function App() {
  return (
    <Desktop>
      <Global />
      <ShortcutGrid>
        {shortcuts.map(([icon, label], i) => (
          <Shortcut key={i}>
            <ShortcutIcon>{icon}</ShortcutIcon>
            <ShortcutLabel>{label}</ShortcutLabel>
          </Shortcut>
        ))}
      </ShortcutGrid>
      <SpeedBall>110.39</SpeedBall>
      <MeetingTag>
        <Svg w={10} h={8}><path d="M1 7V5M3.500 7V4M6 7V2.500M8.500 7V1" stroke={STEEL} /></Svg>
        <Svg w={6} h={8}><path d="M1 2l2-1 2 1v4L3 7 1 6Z" fill={STEEL} /></Svg>
        腾讯会议
        <Svg w={11}><circle cx="5.500" cy="5.500" r="4.800" stroke={STEEL} /><path d="M5.500 2.500v4M5.500 7.500V9" stroke={PALE} /></Svg>
      </MeetingTag>
      <SpeakerBar>
        <Svg w={8} h={13}><rect x="2" y="0" width="4" height="7" rx="2" fill={STEEL} /><path d="M.5 5q0 4 3.500 4t3.500-4M4 9v3M2 12.500h4" stroke={STEEL} /></Svg>
        <SpeakerName>正在讲话: 小迪安全;</SpeakerName>
        <Svg w={30} h={15}><path d="M0 13q1-6 6-7l3-5 4 4 4-1 5 5 6 3-2 3M4 12l2-3 2 4 3-5 3 5 2-4 3 5 3-3M7 8l3-2 3 3 3-2 4 4" stroke={STEEL} strokeDasharray="1 1" /></Svg>
      </SpeakerBar>
      <Settings />
      <ContextMenu />
      <ChatWindow />
      <Launcher />
      <AssistantPanel />
      <TaskbarView />
      <Corner $v="top" $h="left" />
      <Corner $v="top" $h="right" />
      <Corner $v="bottom" $h="left" />
      <Corner $v="bottom" $h="right" />
      <Pointer $x={1313} $y={467}>
        <Svg w={14} h={21}><path d="M.7 1v16.500l4-3.500 2.500 5.500 3-1.300L8 13h5Z" fill={SNOW} stroke="#5c6d72" /></Svg>
      </Pointer>
      <Pointer $x={1} $y={948}>
        <Svg w={20} h={22}><path d="M0 0v16l3.800-3.500L6.500 18l2.300-1-2.300-5.500h5Z" fill={SNOW} /><path d="M12 11h7M10 15.500h8M7 20h12" stroke={STEEL} strokeWidth="1.200" /></Svg>
      </Pointer>
    </Desktop>
  );
}
